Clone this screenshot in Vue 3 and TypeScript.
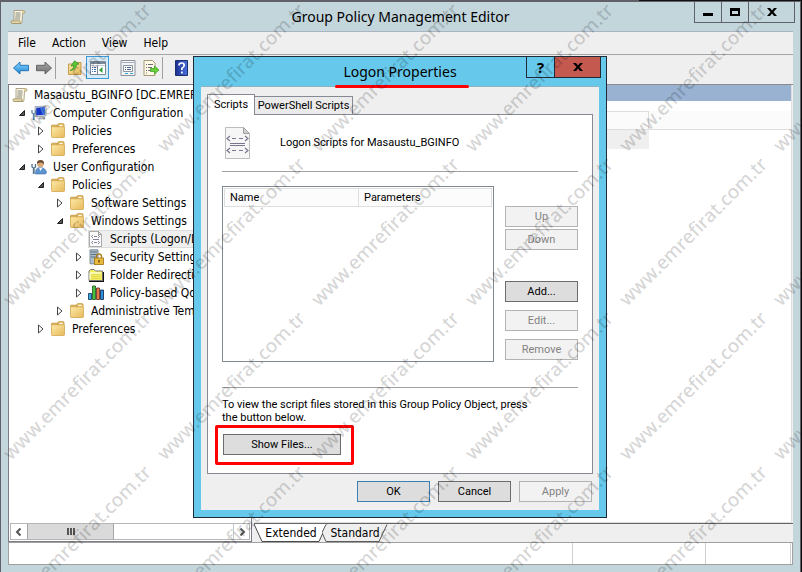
<script setup lang="ts">
interface TreeNode {
  label: string
  level: number
  icon: string
  state?: 'open' | 'closed'
  selected?: boolean
}

const menus: string[] = ['File', 'Action', 'View', 'Help']

const nodes: TreeNode[] = [
  { label: 'Masaustu_BGINFO [DC.EMREFIRAT', level: 0, icon: 'scroll' },
  { label: 'Computer Configuration', level: 1, icon: 'computer', state: 'open' },
  { label: 'Policies', level: 2, icon: 'folder', state: 'closed' },
  { label: 'Preferences', level: 2, icon: 'folder', state: 'closed' },
  { label: 'User Configuration', level: 1, icon: 'user', state: 'open' },
  { label: 'Policies', level: 2, icon: 'folder', state: 'open' },
  { label: 'Software Settings', level: 3, icon: 'folder', state: 'closed' },
  { label: 'Windows Settings', level: 3, icon: 'folder', state: 'open' },
  { label: 'Scripts (Logon/Logoff)', level: 4, icon: 'script', selected: true },
  { label: 'Security Settings', level: 4, icon: 'security', state: 'closed' },
  { label: 'Folder Redirection', level: 4, icon: 'redirect', state: 'closed' },
  { label: 'Policy-based QoS', level: 4, icon: 'chart', state: 'closed' },
  { label: 'Administrative Templates', level: 3, icon: 'folder', state: 'closed' },
  { label: 'Preferences', level: 2, icon: 'folder', state: 'closed' },
]

const indent = (level: number): string => (level === 0 ? '3px' : `${7 + 19 * (level - 1)}px`)

// Watermark copies repeat on a square grid
const tile = 154
const marks = Array.from({ length: 24 }, (_, i) => ({
  x: (i % 6) * tile + 11,
  y: Math.floor(i / 6) * tile + 153,
}))
</script>

<template>
  <div class="desktop">
    <svg class="sprite" aria-hidden="true">
      <linearGradient id="gFolder" x1="0" y1="0" x2="1" y2="1"><stop offset="0" stop-color="#fdeaa9" /><stop offset="1" stop-color="#e6b95a" /></linearGradient>
      <linearGradient id="gBlue" x1="0" y1="0" x2="0" y2="1"><stop offset="0" stop-color="#8fd6fb" /><stop offset="1" stop-color="#1a86d8" /></linearGradient>
      <linearGradient id="gGray" x1="0" y1="0" x2="0" y2="1"><stop offset="0" stop-color="#a8a8a8" /><stop offset="1" stop-color="#6e6e6e" /></linearGradient>
      <linearGradient id="gHelp" x1="0" y1="0" x2="1" y2="0"><stop offset="0" stop-color="#1c2f8f" /><stop offset="1" stop-color="#4a6fe0" /></linearGradient>
      <symbol id="scroll" viewBox="0 0 16 16">
        <path d="M4 1.5h9.500q1.500 0 1.500 1.500t-1.500 1.200h-1L12 13q0 1.500-1.500 1.500h-8Q4 13 4 11z" fill="#fbf7e4" stroke="#9c8f6c" stroke-width=".8" />
        <path d="M2.500 14.500Q1 14.500 1 13t1.500-1.200h7.500Q9.800 14.500 11 14.500z" fill="#e5d6a4" stroke="#9c8f6c" stroke-width=".8" />
        <path d="M12 1.500q2.500 0 2.500 1.500t-2 1.200z" fill="#dcc98d" />
        <path d="M5.500 4h5M5.500 6h5M5.300 8h5M5 10h5" stroke="#77766e" stroke-width=".9" />
      </symbol>
      <symbol id="folder" viewBox="0 0 16 16">
        <path d="M1.500 4V3q0-.8.800-.8h5.200V4zM8 4.500v-3q0-.8.800-.8h4.400q.8 0 .8.800v3z" fill="#f0c96f" stroke="#b98a33" stroke-width=".8" />
        <path d="M9.500 2.500h3" stroke="#fff" />
        <rect x="1.500" y="3.800" width="13" height="10.700" rx=".8" fill="url(#gFolder)" stroke="#d3a64e" stroke-width=".8" />
      </symbol>
      <symbol id="computer" viewBox="0 0 16 16">
        <path d="M9 11h4l1 3H8z" fill="#b8bcc2" stroke="#888" stroke-width=".5" />
        <path d="M4 1.500 15 1v10l-11 .5z" fill="#d8dce2" stroke="#8c94a0" stroke-width=".7" />
        <path d="M5.200 2.800 14 2.300v7.500l-8.800.4z" fill="#1737c6" /><path d="M9 2.600l5-.3v7.500l-2 .1z" fill="#3f7bea" />
        <path d="M1 5v3l1.500 1v6M4.500 5v3L3 9v6" stroke="#5e86a5" fill="none" stroke-width="1.300" />
      </symbol>
      <symbol id="user" viewBox="0 0 16 16">
        <path d="M4.500 15q-.5-6.500 4.500-6.500T15.500 13q0 2-1.500 2z" fill="#5c94cf" stroke="#3d6fa8" stroke-width=".6" />
        <path d="M8 8.700 9.500 12 11.500 8.700z" fill="#fff" />
        <circle cx="9.500" cy="5" r="3.300" fill="#d9a878" /><path d="M6 5Q5.500 1 9.500 1T13 5.500Q12 3.300 9.500 3.500 7 3.500 6 5z" fill="#6a4a30" />
        <path d="M1 5v3l1.500 1v6M4.500 5v3L3 9v6" stroke="#4f6f8d" fill="none" stroke-width="1.300" />
      </symbol>
      <symbol id="script" viewBox="0 0 26 32">
        <path d="M.5.500h18l6 6v25H.5z" fill="#f6f6f6" stroke="#bcbcbc" /><path d="M18.500.500v6h6z" fill="#cfcfcf" stroke="#a0a0a0" />
        <path d="M5 9 2 11.500 5 14M20 9l3 2.500-3 2.500M5 21l-3 2.500L5 26M20 21l3 2.500-3 2.500M7 11.500h4M14 11.500h4M5 16.500h15M5 18.500h15M7 23.500h4M14 23.500h4" fill="none" stroke="#77778f" stroke-width="1.200" />
      </symbol>
      <symbol id="script-small" viewBox="0 0 16 16">
        <path d="M1.500.500h9l3 3v12h-12z" fill="#fafafa" stroke="#a9a9a9" /><path d="M10.500.500v3h3" fill="none" stroke="#999" />
        <path d="M5 4 3.500 5.500 5 7M10 4l1.500 1.500L10 7M5 10l-1.500 1.500L5 13M10 10l1.500 1.500L10 13M6 5.500h3M5 8.500h6M6 11.500h3" fill="none" stroke="#72728c" stroke-width=".9" />
      </symbol>
      <symbol id="security" viewBox="0 0 16 16">
        <path d="M2 .8h8v14H2z" fill="#aebdca" stroke="#66788a" stroke-width=".8" /><path d="M3 3h6M3 5.500h6M3 8h6" stroke="#5d7184" />
        <path d="M8.500 9V7.500q0-2.500 2.500-2.500t2.500 2.500V9" fill="none" stroke="#a98124" stroke-width="1.400" />
        <rect x="6.500" y="9" width="9" height="6.500" fill="#e8b93c" stroke="#9c7315" stroke-width=".8" /><path d="M11 11v2.500" stroke="#6a4b08" stroke-width="1.400" />
      </symbol>
      <symbol id="redirect" viewBox="0 0 16 16">
        <path d="M1 13.500V4l1.500-1.500H6L7.500 4h7v9.500z" fill="#f4ee5e" stroke="#777" /><path d="M2 12.500V6h11" fill="none" stroke="#fff" />
        <path d="M4 7v6M6 7v6M8 7v6M10 7v6M12 7v6" stroke="#c9c74a" stroke-dasharray="1 1" /><path d="M1 14.500h14.500V5" fill="none" stroke="#111" stroke-width="1.200" />
      </symbol>
      <symbol id="chart" viewBox="0 0 16 16">
        <path d="M.5 8.500h3v6H.5z" fill="#35a8e8" stroke="#0b2c48" stroke-width=".8" /><path d="M4.500 1h3v13.500h-3z" fill="#46c43f" stroke="#1d5320" stroke-width=".8" />
        <path d="M8.500 3h3v11.500h-3z" fill="#e8774c" stroke="#5d2a1b" stroke-width=".8" /><path d="M12.500 5h3v9.500h-3z" fill="#2c8fe4" stroke="#0b2040" stroke-width=".8" />
      </symbol>
      <symbol id="back" viewBox="0 0 16 16"><path d="M.5 8 7 2v3.300h8.500v5.400H7V14z" fill="url(#gBlue)" stroke="#1b6db4" stroke-width=".9" /></symbol>
      <symbol id="forward" viewBox="0 0 16 16"><path d="M15.500 8 9 2v3.300H.5v5.400H9V14z" fill="url(#gGray)" stroke="#5c5c5c" stroke-width=".9" /></symbol>
      <symbol id="up-folder" viewBox="0 0 16 16">
        <path d="M1.500 4h6l1-1.500h5.500v12h-12.500z" fill="url(#gFolder)" stroke="#b98a33" stroke-width=".8" />
        <path d="M3 10.500q4-1 3.500-5L4 6 7.500.8 12 4l-2.500.6Q10 9.500 3 10.500z" fill="#5cc63a" stroke="#2f8d1c" stroke-width=".7" />
      </symbol>
      <symbol id="panes" viewBox="0 0 16 16">
        <path d="M.5 1.500h15v13H.5z" fill="#fff" stroke="#7c8896" /><path d="M1 3h14" stroke="#7c8896" stroke-width="2" /><path d="M1 5.500h14" stroke="#c5ccd4" />
        <path d="M7.500 6v8" stroke="#7c8896" /><path d="M2 7.500h1M4 7.500h2M2 9.500h1M4 9.500h2M2 11.500h1M4 11.500h2" stroke="#3d6fb0" /><path d="M12.500 7v6L9 10z" fill="#2e9d3a" />
      </symbol>
      <symbol id="props" viewBox="0 0 16 16">
        <path d="M1 .5h14v15H1z" fill="#f1f3f5" stroke="#8a929c" /><path d="M2 2.500h12" stroke="#a7b0ba" /><path d="M3.500 5.500h9v6h-9z" fill="#fff" stroke="#8a929c" />
        <path d="M5 7.500h1M7 7.500h4M5 9.500h1M7 9.500h4" stroke="#4a6485" /><path d="M5 13.500h3M10 13.500h3" stroke="#36a6d8" stroke-width="1.200" />
      </symbol>
      <symbol id="export" viewBox="0 0 16 16">
        <path d="M1 .5h8.500L12 3v12.500H1z" fill="#fffbe8" stroke="#a49a74" /><path d="M3 4.500h1M5 4.500h5M3 7.500h1M5 7.500h4M3 10.500h1M5 10.500h4M3 13h1" stroke="#6e6e78" />
        <path d="M7.500 8.500h4V6l4.500 4-4.500 4v-2.500h-4z" fill="#66d03a" stroke="#3b9a1d" stroke-width=".7" />
      </symbol>
      <symbol id="help" viewBox="0 0 16 16">
        <path d="M1.500.500h12v15h-12z" fill="url(#gHelp)" stroke="#1b2c6f" />
        <path d="M5 5.500Q5 3 7.600 3t2.600 2.300Q10.200 7 7.900 8.200V10M7.900 11.500v2" fill="none" stroke="#fff" stroke-width="1.700" />
      </symbol>
    </svg>

    <div class="desktop-edge"></div>
    <div class="window">
      <header class="titlebar">
        <svg class="icon app-icon"><use href="#scroll" /></svg>
        <h1>Group Policy Management Editor</h1>
        <div class="win-buttons">
          <button type="button" aria-label="Minimize"><svg viewBox="0 0 12 12"><path d="M1 7h10v3H1z" /></svg></button>
          <button type="button" aria-label="Maximize"><svg viewBox="0 0 12 12"><path d="M1 2h10v8H1zM3 5v3h6V5z" fill-rule="evenodd" /></svg></button>
          <button type="button" class="wide" aria-label="Close"><svg viewBox="0 0 12 12"><path d="M1 2h3l2 2.500L8 2h3L7.500 6l3.500 4H8L6 7.500 4 10H1l3.500-4z" /></svg></button>
        </div>
      </header>

      <div class="client">
        <nav class="menubar">
          <button v-for="m in menus" :key="m" type="button">{{ m }}</button>
        </nav>
        <div class="toolbar">
          <button type="button" aria-label="Back"><svg class="icon"><use href="#back" /></svg></button>
          <button type="button" aria-label="Forward"><svg class="icon"><use href="#forward" /></svg></button>
          <i class="sep"></i>
          <button type="button" aria-label="Up one level"><svg class="icon"><use href="#up-folder" /></svg></button>
          <button type="button" class="pressed" aria-label="Show tree"><svg class="icon"><use href="#panes" /></svg></button>
          <button type="button" class="spaced" aria-label="Properties"><svg class="icon"><use href="#props" /></svg></button>
          <button type="button" aria-label="Export list"><svg class="icon"><use href="#export" /></svg></button>
          <i class="sep"></i>
          <button type="button" aria-label="Help"><svg class="icon"><use href="#help" /></svg></button>
        </div>

        <main class="panes">
          <section class="tree-pane">
            <ul class="tree">
              <li v-for="(n, i) in nodes" :key="i" :style="{ paddingLeft: indent(n.level) }">
                <span v-if="n.level > 0" class="twisty">
                  <svg v-if="n.state === 'closed'" viewBox="0 0 8 10"><path d="M1.500 1v8L6 5z" fill="#fff" stroke="#444" /></svg>
                  <svg v-else-if="n.state === 'open'" viewBox="0 0 8 10"><path d="M6.500 2.500v5h-5z" fill="#555" stroke="#222" /></svg>
                </span>
                <span class="node" :class="{ selected: n.selected }">
                  <svg class="icon"><use :href="n.icon === 'script' ? '#script-small' : '#' + n.icon" /></svg>
                  <span>{{ n.label }}</span>
                </span>
              </li>
            </ul>
            <div class="scrollbar">
              <button type="button" aria-label="Scroll left"><svg viewBox="0 0 8 8"><path d="M5.500.500 2 4l3.500 3.500" /></svg></button>
              <div class="thumb"><i></i><i></i><i></i></div>
              <button type="button" class="right" aria-label="Scroll right"><svg viewBox="0 0 8 8"><path d="M2.500.500 6 4 2.500 7.500" /></svg></button>
            </div>
          </section>

          <section class="detail-pane">
            <div class="detail">
              <div class="banner"></div>
              <div class="columns"><span></span></div>
              <div class="row"></div>
            </div>
            <div class="view-tabs">
              <button type="button" class="active">
                <svg viewBox="0 0 74 19" preserveAspectRatio="none"><path d="M0 0 8 18.500H65L73 0" fill="#fff" stroke="#444" /></svg><span>Extended</span>
              </button>
              <button type="button" class="std">
                <svg viewBox="0 0 66 19" preserveAspectRatio="none"><path d="M4 .500 0 9 4 18.500H57L65 .500" fill="#efefef" stroke="#555" /></svg><span>Standard</span>
              </button>
            </div>
          </section>
        </main>

        <footer class="status"><span></span><span></span><span></span></footer>
      </div>
    </div>

    <div class="dialog" role="dialog" aria-labelledby="dlg-title">
      <header class="dlg-title">
        <h2 id="dlg-title">Logon Properties</h2>
        <i class="underline"></i>
        <div class="dlg-buttons">
          <button type="button" aria-label="Help">?</button>
          <button type="button" class="close" aria-label="Close"><svg viewBox="0 0 12 12"><path d="M1 2h3l2 2.500L8 2h3L7.500 6l3.500 4H8L6 7.500 4 10H1l3.500-4z" /></svg></button>
        </div>
      </header>
      <div class="dlg-body">
        <div class="tabs" role="tablist">
          <button type="button" role="tab" class="current" aria-selected="true">Scripts</button>
          <button type="button" role="tab" aria-selected="false">PowerShell Scripts</button>
        </div>
        <div class="sheet">
          <div class="intro">
            <svg class="doc"><use href="#script" /></svg>
            <p>Logon Scripts for Masaustu_BGINFO</p>
          </div>
          <hr>
          <div class="lists">
            <div class="listbox">
              <table>
                <thead><tr><th scope="col" class="name">Name</th><th scope="col">Parameters</th></tr></thead>
              </table>
            </div>
            <div class="actions">
              <div class="group">
                <button type="button" class="btn" disabled>Up</button>
                <button type="button" class="btn" disabled>Down</button>
              </div>
              <div class="group edits">
                <button type="button" class="btn">Add...</button>
                <button type="button" class="btn" disabled>Edit...</button>
                <button type="button" class="btn" disabled>Remove</button>
              </div>
            </div>
          </div>
          <hr>
          <p class="hint">To view the script files stored in this Group Policy Object, press<br>the button below.</p>
          <div class="highlight"><button type="button" class="btn show">Show Files...</button></div>
        </div>
        <div class="dlg-actions">
          <button type="button" class="btn default">OK</button>
          <button type="button" class="btn">Cancel</button>
          <button type="button" class="btn" disabled>Apply</button>
        </div>
      </div>
    </div>

    <svg class="watermark">
      <text v-for="(m, i) in marks" :key="i" :transform="`translate(${m.x} ${m.y}) rotate(-45)`">www.emrefirat.com.tr</text>
    </svg>
  </div>
</template>

<style>
body {
  margin: 0;
  background: #000;
}
</style>

<style scoped>
.desktop {
  position: relative;
  min-height: 100vh;
  display: flex;
  flex-direction: column;
  overflow: hidden;
  background: #0b0b0d;
  padding-right: 1px;
  box-sizing: border-box;
  font: 12px/18px "DejaVu Sans Condensed", "Noto Sans", sans-serif;
  color: #000;
}
.desktop *, .desktop *::before { box-sizing: border-box; }
.sprite { position: absolute; width: 0; height: 0; }
button { margin: 0; padding: 0; border: 0; background: none; font: inherit; color: inherit; }
h1, h2, p, ul { margin: 0; padding: 0; font-weight: 400; }
.icon { width: 16px; height: 16px; flex: none; display: block; }

.desktop-edge { height: 1px; background: linear-gradient(to left, #111 162px, #5f6068 162px); }
.window {
  flex: 1;
  display: flex;
  flex-direction: column;
  background: #c3d6dc;
  border: 1px solid #5f6068;
  border-bottom: 0;
  padding: 0 7px 7px;
}
.titlebar { display: grid; grid-template-columns: 100px 1fr 102px; height: 29px; margin-right: -2px; }
.app-icon { margin: 7px 0 0 2px; }
.titlebar h1 { font: 14px/29px "Noto Sans", "Open Sans", sans-serif; text-align: center; }
.win-buttons { display: flex; justify-self: end; height: 21px; border: 1px solid #5f6068; border-top: 0; }
.win-buttons button { width: 27px; display: grid; place-items: center; border-right: 1px solid #5f6068; }
.win-buttons button.wide { width: 45px; border-right: 0; }
.win-buttons svg, .close svg { width: 12px; height: 12px; }

.client { flex: 1; display: flex; flex-direction: column; background: #efefef; border-top: 1px solid #aab4c2; }
.menubar { display: flex; gap: 16px; height: 23px; padding-left: 10px; align-items: center; border-bottom: 1px solid #a5a5a5; }
.toolbar { display: flex; align-items: center; height: 29px; padding: 0 1px 4px; }
.toolbar button { width: 23px; height: 23px; display: grid; place-items: center; }
.toolbar button.pressed { background: #d5ebf8; border: 1px solid #3c9bd6; }
.toolbar .spaced { margin-left: 7px; }
.sep { width: 1px; height: 22px; background: #a0a0a0; margin-right: 7px; }

.panes { flex: 1; display: grid; grid-template-columns: 244px 1fr; gap: 2px; }
.tree-pane { display: flex; flex-direction: column; min-width: 0; background: #fff; border: 1px solid #7d7d88; padding: 1px; }
.tree { list-style: none; flex: 1; overflow: hidden; margin-left: -1px; }
.tree li { display: flex; height: 18px; white-space: nowrap; }
.twisty { width: 15px; display: flex; align-items: center; padding-left: 2px; flex: none; }
.twisty svg { width: 8px; height: 10px; }
.node { display: flex; flex: 1; align-items: center; gap: 6px; }
.node.selected { background: #efefef; box-shadow: inset 0 0 0 1px #dcdcdc; }
.scrollbar { display: flex; height: 17px; border: 1px solid #b5b5b5; background: #fff; }
.scrollbar button { width: 16px; display: grid; place-items: center; }
.scrollbar .right { margin-left: auto; border-left: 1px solid #c8c8c8; }
.scrollbar svg { width: 8px; height: 8px; fill: none; stroke: #555; stroke-width: 2; }
.thumb { width: 87px; display: flex; align-items: center; justify-content: center; gap: 1px; background: #dadada; border: 1px solid #a5a5a5; border-width: 0 1px; }
.thumb i { width: 2px; height: 7px; background: #555; }

.detail-pane { display: flex; flex-direction: column; border-top: 1px solid #8c8c8c; }
.detail { flex: 1; background: #fff; border-right: 1px solid #dedede; margin-right: 1px; border-bottom: 1px solid #dcdcdc; }
.banner { height: 16px; background: #99b2d1; margin-bottom: 10px; }
.columns { height: 19px; background: #fbfbfb; border-bottom: 1px solid #dedede; }
.columns span { display: block; width: 395px; height: 18px; border: 1px solid #dedede; border-width: 1px 1px 0 0; }
.row { width: 395px; height: 19px; background: #efefef; }
.view-tabs { display: flex; height: 19px; border-top: 1px solid #666; }
.view-tabs button { position: relative; width: 74px; line-height: 18px; }
.view-tabs svg { position: absolute; left: 0; top: 0; width: 100%; height: 100%; }
.view-tabs span { position: relative; }
.view-tabs .std { width: 66px; margin-left: -6px; }

.status { display: flex; justify-content: flex-end; height: 23px; background: #fff; border: 1px solid #a0a0a0; }
.status span { border-left: 1px solid #d0d0d0; width: 133px; }
.status span:nth-child(2) { width: 85px; }
.status span:nth-child(3) { width: 2px; }

.dialog {
  position: absolute;
  left: 193px;
  top: 56px;
  width: 414px;
  background: #66c8ea;
  border: 1px solid #1f2c38;
  padding: 0 7px 7px;
  font: 11px/13px Roboto, "Liberation Sans", sans-serif;
}
.dlg-title { position: relative; height: 29px; }
.dlg-title h2 { font: 14px/30px "Noto Sans", "Open Sans", sans-serif; text-align: center; }
.underline { position: absolute; left: 134px; right: 130px; bottom: -2px; height: 3px; border-radius: 2px; background: #f00; }
.dlg-buttons { position: absolute; right: -2px; top: 0; display: flex; height: 21px; border: 1px solid #1f2c38; border-top: 0; }
.dlg-buttons button { width: 27px; font: bold 15px/20px "Noto Sans", sans-serif; }
.dlg-buttons .close { width: 46px; display: grid; place-items: center; background: #c4594f; border-left: 1px solid #1f2c38; }
.dlg-body { background: #efefef; border-top: 1px solid #8fb4c4; padding: 7px 6px 8px; }
.tabs { display: flex; align-items: flex-end; height: 20px; }
.tabs button { height: 18px; border: 1px solid #858a95; border-width: 1px 1px 0 0; background: #ebebeb; width: 98px; }
.tabs .current { position: relative; width: 48px; height: 21px; margin-bottom: -1px; background: #fff; border-left-width: 1px; padding-bottom: 2px; }
.sheet { background: #fff; border: 1px solid #858a95; padding: 12px 14px 8px; }
.intro { display: flex; gap: 29px; padding-left: 3px; height: 44px; }
.intro p { line-height: 32px; }
.doc { width: 26px; height: 32px; flex: none; }
hr { margin: 0; border: 0; height: 1px; background: #a0a0a0; }
.lists { display: flex; gap: 11px; padding: 14px 0 25px; }
.listbox { flex: 1; height: 176px; border: 1px solid #7f8790; padding: 1px; }
table { width: 100%; border-collapse: collapse; table-layout: fixed; }
th { height: 18px; padding: 0 0 0 5px; font-weight: 400; text-align: left; background: #fcfcfc; border: 1px solid #dedede; }
th.name { width: 134px; }
.actions { display: flex; flex-direction: column; gap: 31px; padding-top: 20px; }
.group { display: flex; flex-direction: column; gap: 2px; }
.edits { gap: 8px; }
.btn { height: 21px; width: 73px; background: #dddddd; border: 1px solid #6c6c6c; }
.btn:disabled { background: #f2f2f2; border-color: #b3b3b3; color: #838383; }
.hint { padding: 10px 0 1px; }
.highlight { width: 139px; height: 40px; margin-left: -7px; border: 3px solid #f00; border-radius: 2px; padding: 6px 5px; }
.btn.show { width: 118px; }
.dlg-actions { display: flex; justify-content: flex-end; gap: 8px; padding: 7px 1px 0 0; }
.btn.default { border-color: #3c7fb1; }

.watermark { position: absolute; left: 0; top: 0; width: 100%; height: 100%; pointer-events: none; }
.watermark text { font: 500 19px "Noto Sans", "Open Sans", sans-serif; fill: rgba(0, 0, 0, 0.18); }
</style>
